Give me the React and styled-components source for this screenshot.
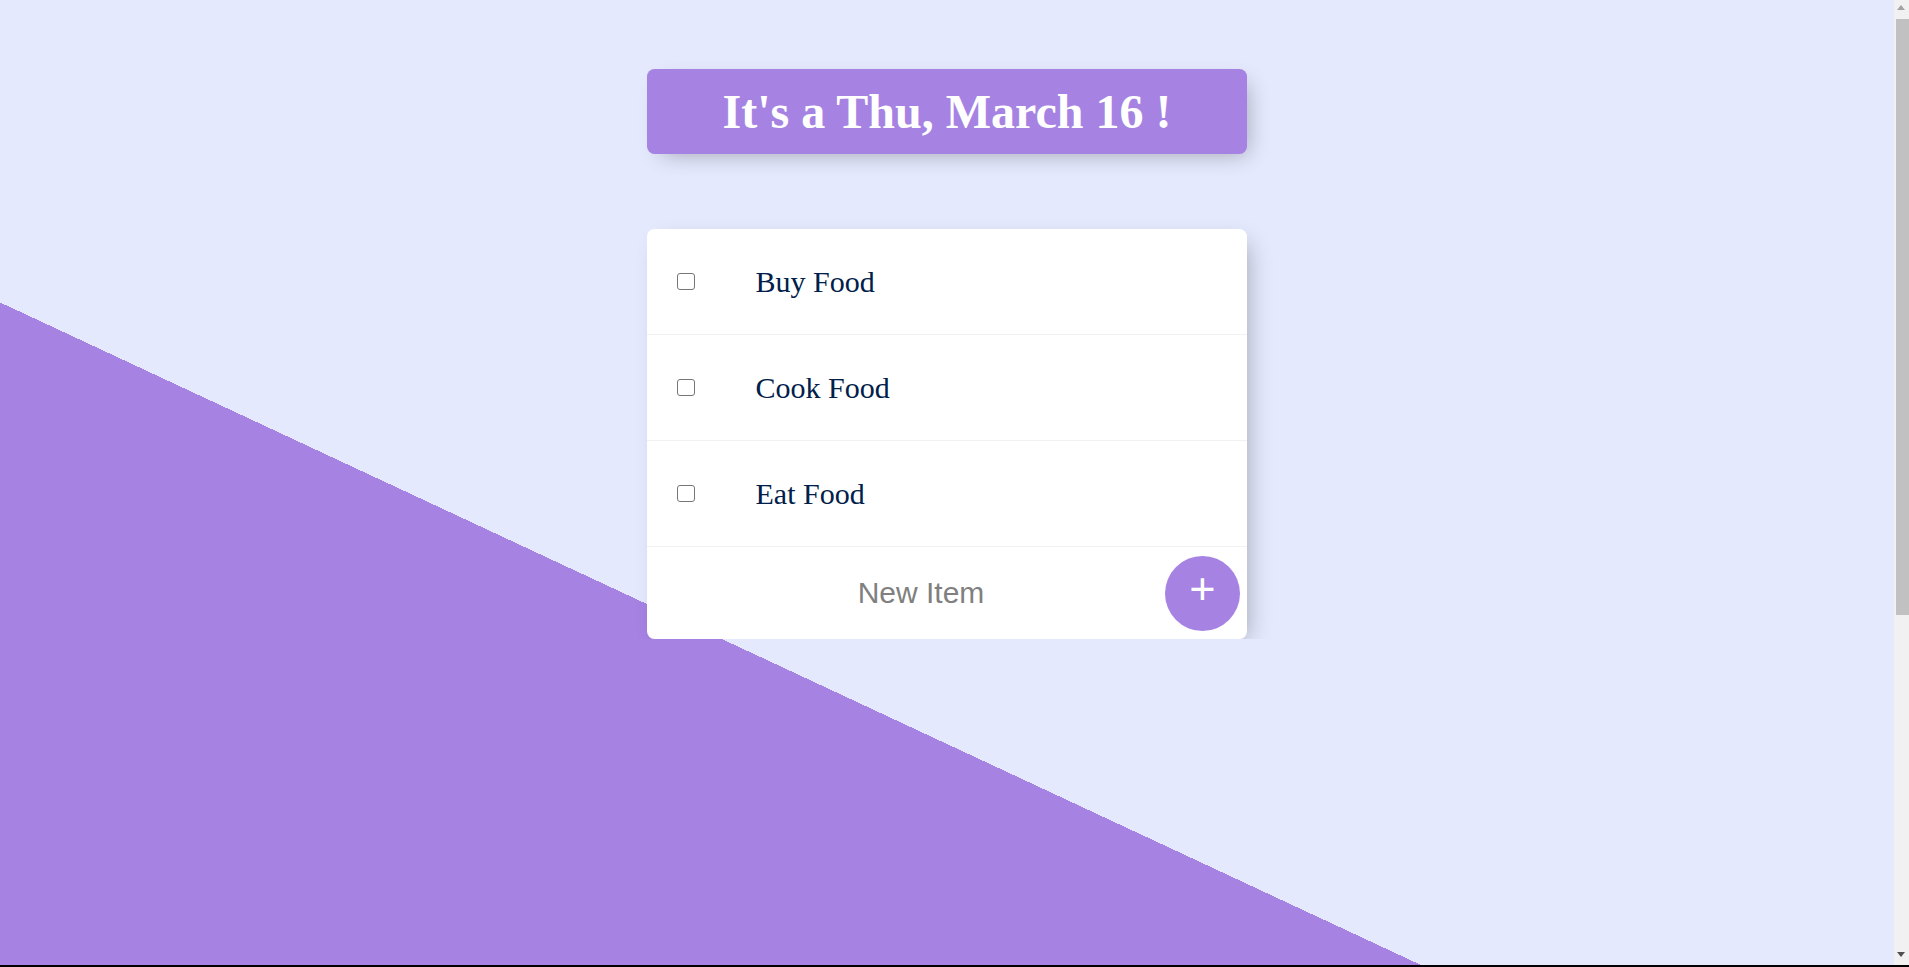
import styled, { createGlobalStyle } from 'styled-components';
import { useState } from 'react';

const GlobalStyle = createGlobalStyle`
  html {
    min-height: 1500px;
    background-color: #e4e9fd;
    background-image: linear-gradient(25deg, #a683e3 50%, #e4e9fd 50%);
    background-size: 1894px 1500px;
    background-position: 0 -6px;
    background-repeat: no-repeat;
    font-family: "Liberation Serif", "Times New Roman", serif;
  }
  body {
    margin: 0;
    padding-right: 15px;
  }
`;

const Page = styled.div`
  display: flex;
  flex-direction: column;
  align-items: center;
  gap: 75px;
  padding-top: 69px;
`;

const Box = styled.div`
  width: 600px;
  background: ${(p) => (p.$heading ? '#a683e3' : '#fff')};
  border-radius: 7.5px;
  box-shadow: 7.5px 7.5px 22.5px -7.5px rgba(0, 0, 0, 0.3);
  text-align: ${(p) => (p.$heading ? 'center' : 'left')};
`;

const Title = styled.h1`
  margin: 0;
  padding: 15px;
  color: #fff;
  font-size: 48px;
  font-weight: bold;
  font-family: "Liberation Serif", "Times New Roman", serif;
`;

const Item = styled.div`
  display: flex;
  align-items: center;
  min-height: ${(p) => (p.$footer ? '92px' : '105px')};
  border-bottom: 1px solid #f1f1f1;

  &:last-child {
    border-bottom: 0;
  }
`;

const Check = styled.input.attrs({ type: 'checkbox' })`
  appearance: none;
  flex: none;
  width: 17.5px;
  height: 17.5px;
  margin: 0 31px 0 30px;
  border: 1.5px solid #767676;
  border-radius: 3px;
  background: #fff;
  box-sizing: border-box;
  cursor: pointer;

  &:checked {
    background: #a683e3;
    border-color: #a683e3;
  }
`;

const Label = styled.p`
  margin: 0;
  padding: 30px;
  font-size: 30px;
  font-weight: 200;
  color: #00204a;
  text-decoration: ${(p) => (p.$done ? 'line-through #a683e3' : 'none')};
`;

const Form = styled.form`
  display: flex;
  align-items: center;
  height: 92px;
  padding-left: 30px;
`;

const TextInput = styled.input`
  width: 488px;
  height: 90px;
  padding: 0;
  border: none;
  text-align: center;
  font-family: "Liberation Sans", Arial, sans-serif;
  font-size: 30px;
  font-weight: 200;
  color: #00204a;
  background: transparent;

  &::placeholder {
    color: grey;
    opacity: 1;
  }

  &:focus {
    outline: none;
    box-shadow: inset 0 -4.5px 0 0 #a683e3;
  }
`;

const AddButton = styled.button`
  flex: none;
  width: 75px;
  height: 75px;
  padding: 0 0 9px;
  border: 0;
  border-radius: 50%;
  background-color: #a683e3;
  color: #fff;
  font-family: "Liberation Sans", Arial, sans-serif;
  font-size: 45px;
  line-height: 1;
  cursor: pointer;
`;

/* browser chrome seen in the screenshot: scrollbar + bottom edge */
const ScrollTrack = styled.div`
  position: fixed;
  top: 0;
  right: 0;
  bottom: 0;
  width: 15px;
  background: #f1f1f1;
`;

const ScrollThumb = styled.div`
  position: absolute;
  top: 19px;
  left: 2px;
  right: 0;
  height: 596px;
  background: #c1c1c1;
`;

const Arrow = styled.div`
  position: absolute;
  left: 3px;
  width: 0;
  height: 0;
  border-left: 4.5px solid transparent;
  border-right: 4.5px solid transparent;
  ${(p) =>
    p.$down
      ? 'bottom: 10px; border-top: 5px solid #505050;'
      : 'top: 5px; border-bottom: 5px solid #a3a3a3;'}
`;

const BottomEdge = styled.div`
  position: fixed;
  left: 0;
  right: 0;
  bottom: 0;
  height: 2px;
  background: #000;
`;

const App = () => {
  const [items, setItems] = useState([
    { text: 'Buy Food', done: false },
    { text: 'Cook Food', done: false },
    { text: 'Eat Food', done: false },
  ]);
  const [draft, setDraft] = useState('');

  const toggle = (i) =>
    setItems(items.map((it, idx) => (idx === i ? { ...it, done: !it.done } : it)));

  const handleSubmit = (e) => {
    e.preventDefault();
    if (!draft.trim()) return;
    setItems([...items, { text: draft, done: false }]);
    setDraft('');
  };

  return (
    <>
      <GlobalStyle />
      <Page>
        <Box $heading>
          <Title>It's a Thu, March 16 !</Title>
        </Box>
        <Box>
          {items.map((it, i) => (
            <Item key={i}>
              <Check checked={it.done} onChange={() => toggle(i)} />
              <Label $done={it.done}>{it.text}</Label>
            </Item>
          ))}
          <Item $footer>
            <Form onSubmit={handleSubmit}>
              <TextInput
                type="text"
                placeholder="New Item"
                autoComplete="off"
                value={draft}
                onChange={(e) => setDraft(e.target.value)}
              />
              <AddButton type="submit">+</AddButton>
            </Form>
          </Item>
        </Box>
      </Page>
      <ScrollTrack>
        <Arrow />
        <ScrollThumb />
        <Arrow $down />
      </ScrollTrack>
      <BottomEdge />
    </>
  );
};

export default App;
